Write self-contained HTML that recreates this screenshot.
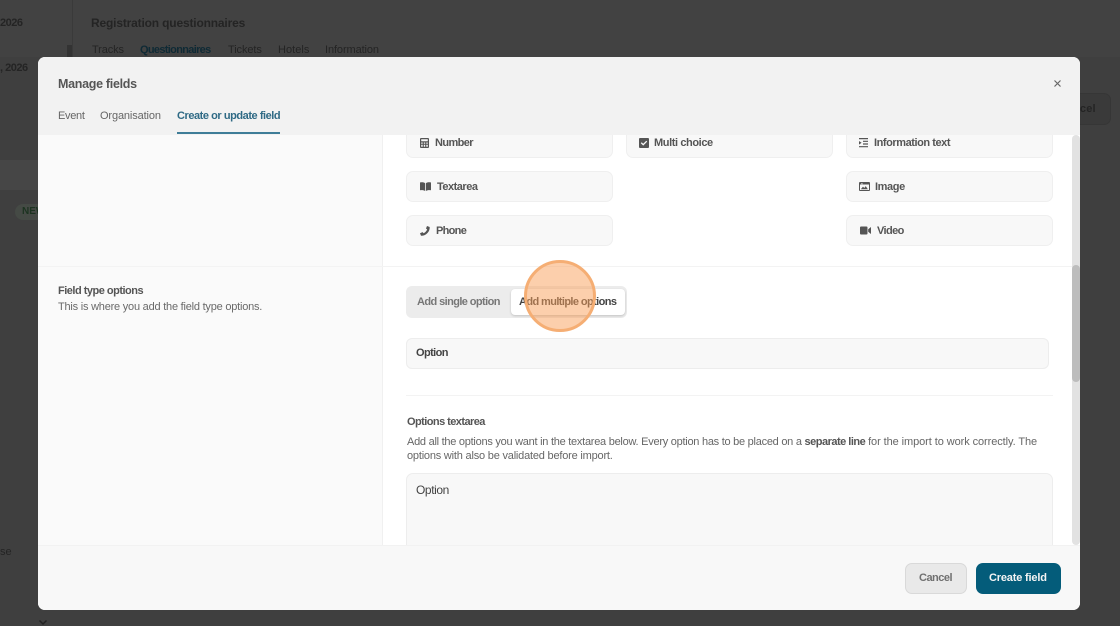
<!DOCTYPE html>
<html lang="en"><head><meta charset="utf-8"><title>Manage fields</title>
<style>
*{box-sizing:border-box}
html,body{margin:0;padding:0}
body{width:1120px;height:626px;overflow:hidden;position:relative;background:#3f3f3f;font-family:"Liberation Sans",sans-serif;color:#555}
.a{position:absolute}
.t{position:absolute;white-space:nowrap;line-height:16px;font-size:11px}
.b{font-weight:700}
.bg{color:#242424;font-weight:700}
.card{position:absolute;background:#f8f8f8;border:1px solid #efefef;border-radius:7px;width:207px}
svg{position:absolute;fill:#555}
</style></head><body>
<div class="a" style="left:0;top:0;width:1120px;height:57px;background:#424242"></div>
<div class="a" style="left:72px;top:0;width:1px;height:57px;background:#3a3a3a"></div>
<div class="a" style="left:67px;top:45px;width:5px;height:12px;background:#333"></div>
<div class="t bg" style="left:0;top:15px;letter-spacing:-.5px">2026</div>
<div class="t bg" style="left:0;top:60px;letter-spacing:-.5px">, 2026</div>
<div class="t bg" style="left:91px;top:15px;font-size:12px;letter-spacing:-.17px">Registration questionnaires</div>
<div class="t bg" style="left:92px;top:42px;font-weight:400;letter-spacing:-.13px">Tracks</div>
<div class="t bg" style="left:140px;top:42px;color:#0f2a35;letter-spacing:-.68px">Questionnaires</div>
<div class="t bg" style="left:228px;top:42px;font-weight:400;letter-spacing:-.1px">Tickets</div>
<div class="t bg" style="left:278px;top:42px;font-weight:400;letter-spacing:.05px">Hotels</div>
<div class="t bg" style="left:325px;top:42px;font-weight:400;letter-spacing:-.1px">Information</div>
<div class="a" style="left:0;top:160px;width:38px;height:30px;background:#464646"></div>
<div class="a" style="left:15px;top:204px;width:30px;height:16px;border-radius:8px;background:#454a45"></div>
<div class="t" style="left:22px;top:204px;font-weight:700;font-size:10px;color:#1c3320">NEW</div>
<div class="t bg" style="left:0;top:544px;font-weight:400">se</div>
<svg style="left:38px;top:618px" width="10" height="8" viewBox="0 0 10 8"><path d="M1.500 2.500 5 6l3.500-3.500" fill="none" stroke="#222" stroke-width="1.500"/></svg>
<div class="a" style="left:1060px;top:93px;width:51px;height:32px;border-radius:7px;background:#3a3a3a;border:1px solid #363636"></div>
<div class="t bg" style="left:1073px;top:101px;letter-spacing:.2px">ncel</div>

<div class="a" style="left:38px;top:57px;width:1042px;height:553px;border-radius:7px;overflow:hidden;background:#fff">
<div class="a" style="left:0;top:0;width:1042px;height:78px;background:#f2f2f2"></div>
<div class="a" style="left:0;top:78px;width:345px;height:410px;background:#fafafa;border-right:1px solid #f0f0f0"></div>
<div class="a" style="left:345px;top:209px;width:689px;height:1px;background:#f3f3f3"></div>
<div class="a" style="left:0;top:209px;width:345px;height:1px;background:#f3f3f3"></div>
<div class="a" style="left:0;top:488px;width:1042px;height:65px;background:#f8f8f8;border-top:1px solid #f2f2f2"></div>
<div class="a" style="left:1034px;top:78px;width:8px;height:410px;background:#e2e2e2;border-radius:4px"></div>
<div class="a" style="left:1034px;top:208px;width:8px;height:117px;background:#bdbdbd;border-radius:4px"></div>
</div>

<div class="t b" style="left:58px;top:76px;font-size:12.500px;color:#555;letter-spacing:-.3px">Manage fields</div>
<svg style="left:1053px;top:79px" width="9" height="9" viewBox="0 0 9 9"><path d="M1.500 1.500l6 6m0-6l-6 6" stroke="#666" stroke-width="1.200" fill="none"/></svg>
<div class="t" style="left:58px;top:108px;color:#666;letter-spacing:-.3px">Event</div>
<div class="t" style="left:100px;top:108px;color:#666;letter-spacing:-.13px">Organisation</div>
<div class="t b" style="left:177px;top:108px;color:#2f6a85;letter-spacing:-.45px">Create or update field</div>
<div class="a" style="left:177px;top:132px;width:103px;height:2px;background:#3f7d98"></div>

<div class="a" style="left:38px;top:135px;width:1034px;height:410px;overflow:hidden">
<div class="card" style="left:368px;top:-20px;height:43px"></div>
<div class="card" style="left:588px;top:-20px;height:43px"></div>
<div class="card" style="left:808px;top:-20px;height:43px"></div>
<div class="card" style="left:368px;top:36px;height:31px"></div>
<div class="card" style="left:808px;top:36px;height:31px"></div>
<div class="card" style="left:368px;top:80px;height:31px"></div>
<div class="card" style="left:808px;top:80px;height:31px"></div>
<div class="a" style="left:368px;top:338px;width:647px;height:120px;background:#f8f8f8;border:1px solid #ededed;border-radius:7px"></div>
<div class="t" style="left:378px;top:347px;font-size:12px;color:#444;letter-spacing:-.4px">Option</div>
</div>

<svg style="left:420px;top:138px" width="9" height="10" viewBox="0 0 9 10"><path fill-rule="evenodd" d="M1 0h7a1 1 0 0 1 1 1v8a1 1 0 0 1-1 1H1a1 1 0 0 1-1-1V1a1 1 0 0 1 1-1zM1.200 1.200v2h6.600v-2zM1.200 4.500v1.200h1.500V4.500zM3.800 4.500v1.200h1.400V4.500zM6.300 4.500v1.200h1.500V4.500zM1.200 6.800V8.800h1.500V6.800zM3.800 6.800V8.800h1.400V6.800zM6.300 6.800V8.800h1.500V6.800z"/></svg>
<div class="t b" style="left:435px;top:135px;letter-spacing:-.6px">Number</div>
<svg style="left:639px;top:138px" width="10" height="10" viewBox="0 0 10 10"><path fill-rule="evenodd" d="M1 0h8a1 1 0 0 1 1 1v8a1 1 0 0 1-1 1H1a1 1 0 0 1-1-1V1a1 1 0 0 1 1-1zM4.200 7.600l4-4-.9-.9-3.100 3.100L2.700 4.300l-.9.900z"/></svg>
<div class="t b" style="left:654px;top:135px;letter-spacing:-.4px">Multi choice</div>
<svg style="left:859px;top:138px" width="9" height="10" viewBox="0 0 9 10"><path d="M0 0h9v1.200H0zM4 2.700h5v1.200H4zM4 5.400h5v1.200H4zM0 8.100h9v1.200H0zM0 3l2.600 1.800L0 6.600z"/></svg>
<div class="t b" style="left:874px;top:135px;letter-spacing:-.44px">Information text</div>

<svg style="left:420px;top:182px" width="11" height="9" viewBox="0 0 11 9"><path d="M0 .5C2 0 4 .3 5.100 1.200V9C4 8.200 2 7.900 0 8.300zM11 .5C9 0 7 .3 5.900 1.200V9C7 8.200 9 7.900 11 8.300z"/></svg>
<div class="t b" style="left:437px;top:179px;letter-spacing:-.5px">Textarea</div>
<svg style="left:859px;top:182px" width="11" height="9" viewBox="0 0 11 9"><path fill-rule="evenodd" d="M1 0h9a1 1 0 0 1 1 1v7a1 1 0 0 1-1 1H1a1 1 0 0 1-1-1V1a1 1 0 0 1 1-1zM1 2.500V8h9V2.500zM1.800 7.200l2.200-2.600 1.300 1.400 1.400-1.900 2.200 3.100zM2.900 1.200a.9.900 0 1 1 0 1.800.9.900 0 0 1 0-1.800z"/></svg>
<div class="t b" style="left:875px;top:179px;letter-spacing:-.4px">Image</div>

<svg style="left:420px;top:226px" width="10" height="10" viewBox="0 0 10 10"><path d="M7 0l2.700 1C10 5.800 5.800 10 1 9.800L0 7.200l2.600-1.100 1 1.200C5 6.600 6.500 5 7.200 3.500L6 2.500z"/></svg>
<div class="t b" style="left:436px;top:223px;letter-spacing:-.7px">Phone</div>
<svg style="left:860px;top:226px" width="11" height="9" viewBox="0 0 11 9"><path d="M1 .5h5.500a1 1 0 0 1 1 1v6a1 1 0 0 1-1 1H1a1 1 0 0 1-1-1v-6a1 1 0 0 1 1-1zM8.200 3.300L11 1v7L8.200 5.700z"/></svg>
<div class="t b" style="left:877px;top:223px;letter-spacing:-.6px">Video</div>

<div class="t b" style="left:58px;top:283px;color:#555;letter-spacing:-.5px">Field type options</div>
<div class="t" style="left:58px;top:299px;color:#6a6a6a;letter-spacing:-.22px">This is where you add the field type options.</div>

<div class="a" style="left:406px;top:286px;width:221px;height:32px;background:#ececec;border-radius:6px"></div>
<div class="t b" style="left:417px;top:294px;color:#777;letter-spacing:-.59px">Add single option</div>
<div class="a" style="left:511px;top:289px;width:114px;height:26px;background:#fff;border-radius:4px;box-shadow:0 1px 2px rgba(0,0,0,.18)"></div>
<div class="t b" style="left:519px;top:294px;color:#444;letter-spacing:-.6px">Add multiple options</div>

<div class="a" style="left:406px;top:338px;width:643px;height:31px;background:#f8f8f8;border:1px solid #ededed;border-radius:6px"></div>
<div class="t b" style="left:416px;top:345px;color:#444;letter-spacing:-.6px">Option</div>
<div class="a" style="left:406px;top:395px;width:647px;height:1px;background:#f3f3f3"></div>
<div class="t b" style="left:407px;top:414px;color:#555;letter-spacing:-.56px">Options textarea</div>
<div class="t" style="left:407px;top:434.500px;color:#666;line-height:14.500px;letter-spacing:-.26px">Add all the options you want in the textarea below. Every option has to be placed on a <b style="color:#555;letter-spacing:-.5px">separate line</b> <span style="letter-spacing:-.08px">for the import to work correctly. The</span><br><span style="letter-spacing:-.2px">options with also be validated before import.</span></div>

<div class="a" style="left:905px;top:563px;width:62px;height:31px;background:#e9e9e9;border:1px solid #d9d9d9;border-radius:7px"></div>
<div class="t b" style="left:919px;top:570px;color:#707070;letter-spacing:-.5px">Cancel</div>
<div class="a" style="left:976px;top:563px;width:85px;height:31px;background:#045c7a;border-radius:7px"></div>
<div class="t b" style="left:989px;top:570px;color:#f4f4f4;letter-spacing:-.18px">Create field</div>

<div class="a" style="left:524px;top:260px;width:72px;height:72px;border-radius:50%;background:rgba(250,160,90,.5);border:3px solid #f5ae74"></div>
</body></html>
